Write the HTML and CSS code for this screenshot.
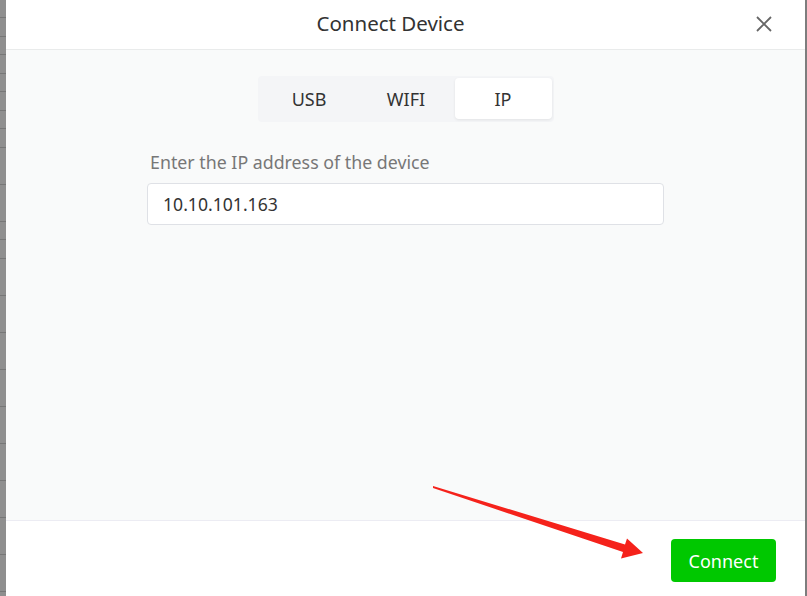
FILE: index.html
```html
<!DOCTYPE html>
<html>
<head>
<meta charset="utf-8">
<link rel="stylesheet" href="styles.css">
</head>
<body>
<div class="page">
  <div class="left-strip"></div>
  <div class="dialog">
    <header class="dlg-header">
      <h1 class="dlg-title">Connect Device</h1>
      <button class="close-btn" aria-label="Close">
        <svg width="16" height="16" viewBox="0 0 16 16"><path d="M1 1L15 15M15 1L1 15" stroke="#666" stroke-width="1.8" fill="none"/></svg>
      </button>
    </header>
    <main class="dlg-body">
      <div class="tabs">
        <div class="tab">USB</div>
        <div class="tab">WIFI</div>
        <div class="tab active">IP</div>
      </div>
      <div class="field">
        <label class="field-label">Enter the IP address of the device</label>
        <div class="input">10.10.101.163</div>
      </div>
    </main>
    <footer class="dlg-footer">
      <button class="connect-btn">Connect</button>
    </footer>
  </div>
  <div class="right-strip"></div>
  <svg class="arrow" width="807" height="596" viewBox="0 0 807 596">
    <polygon points="433,486 625,544.5 627,538.5 643,553 621,558.5 623,552 433,488" fill="#f5221b"/>
  </svg>
</div>
</body>
</html>
```
FILE: styles.css
```css
* { box-sizing: border-box; }
html, body { margin: 0; padding: 0; }
body {
  font-family: "Noto Sans", "Liberation Sans", sans-serif;
  color: #333;
  background: #fff;
}
.page {
  position: relative;
  display: flex;
  width: 807px;
  height: 596px;
  overflow: hidden;
}
.left-strip {
  width: 6px;
  flex: none;
  background-color: #8f8f8f;
  background-image: repeating-linear-gradient(to bottom, transparent 0, transparent 17.5px, #777 17.5px, #777 18.5px);
}
.right-strip {
  width: 2px;
  flex: none;
  background: #7d7d7d;
}
.dialog {
  flex: 1;
  display: flex;
  flex-direction: column;
  background: #fff;
}
.dlg-header {
  height: 50px;
  flex: none;
  display: flex;
  align-items: center;
  justify-content: center;
  position: relative;
  border-bottom: 1px solid #e9ebeb;
  padding-right: 30px;
}
.dlg-title {
  margin: 0;
  font-size: 20.5px;
  font-weight: 400;
  color: #333;
  margin-top: -3px;
}
.close-btn {
  position: absolute;
  right: 33px;
  top: 16px;
  width: 16px;
  height: 16px;
  padding: 0;
  border: 0;
  background: none;
  display: flex;
}
.dlg-body {
  flex: 1;
  background: #f9fafa;
  border-bottom: 1px solid #ececf3;
  display: flex;
  flex-direction: column;
  align-items: center;
  padding-top: 26px;
}
.tabs {
  display: flex;
  background: #f4f5f7;
  border-radius: 4px;
  padding: 2px 2px 3px 3px;
  width: 296px;
  height: 46px;
}
.tab {
  width: 97px;
  display: flex;
  align-items: center;
  justify-content: center;
  font-size: 18px;
  color: #333;
  border-radius: 4px;
}
.tab.active {
  background: #fff;
  box-shadow: 0 1px 3px rgba(0,0,0,0.08);
}
.field {
  width: 517px;
  margin-top: 27px;
  display: flex;
  flex-direction: column;
}
.field-label {
  font-size: 17.8px;
  color: #777;
  padding-left: 3px;
  line-height: 26px;
}
.input {
  margin-top: 8px;
  height: 42px;
  background: #fff;
  border: 1px solid #dfe1e6;
  border-radius: 4px;
  padding-left: 15px;
  display: flex;
  align-items: center;
  font-size: 17.6px;
  color: #333;
}
.dlg-footer {
  height: 75px;
  flex: none;
  display: flex;
  justify-content: flex-end;
  align-items: flex-start;
  padding-top: 18px;
  padding-right: 29px;
}
.connect-btn {
  width: 105px;
  height: 43px;
  border: 0;
  border-radius: 4px;
  background: #00c800;
  color: #fff;
  font-family: inherit;
  font-size: 18px;
  padding: 0;
}
.arrow {
  position: absolute;
  left: 0;
  top: 0;
  pointer-events: none;
}
```
